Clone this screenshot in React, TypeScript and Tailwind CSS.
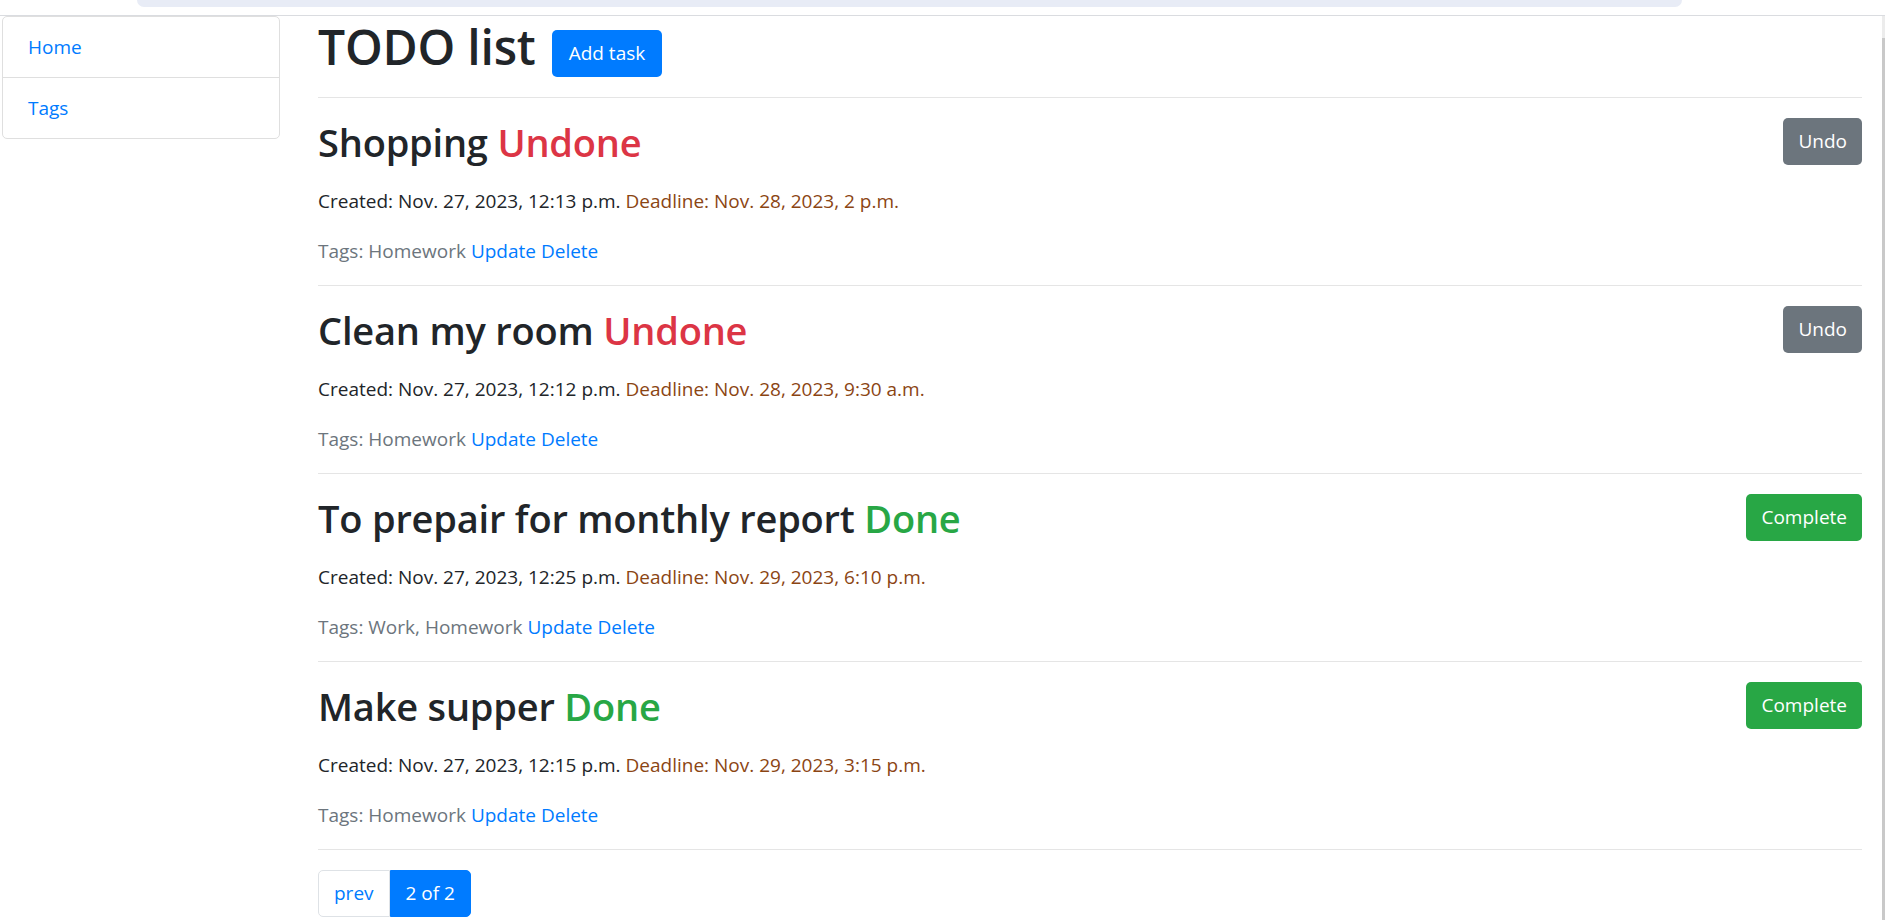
const font = "font-['Open_Sans',sans-serif]";

type Task = {
  title: string;
  done: boolean;
  created: string;
  deadline: string;
  tags: string;
};

const tasks: Task[] = [
  { title: "Shopping", done: false, created: "Nov. 27, 2023, 12:13 p.m.", deadline: "Nov. 28, 2023, 2 p.m.", tags: "Homework" },
  { title: "Clean my room", done: false, created: "Nov. 27, 2023, 12:12 p.m.", deadline: "Nov. 28, 2023, 9:30 a.m.", tags: "Homework" },
  { title: "To prepair for monthly report", done: true, created: "Nov. 27, 2023, 12:25 p.m.", deadline: "Nov. 29, 2023, 6:10 p.m.", tags: "Work, Homework" },
  { title: "Make supper", done: true, created: "Nov. 27, 2023, 12:15 p.m.", deadline: "Nov. 29, 2023, 3:15 p.m.", tags: "Homework" },
];

function TaskItem({ t }: { t: Task }) {
  return (
    <div className="pt-5 pb-[19px] border-b border-[#e5e5e5]">
      <div className="flex items-start justify-between">
        <h2 className="text-[38px] leading-[48px] font-semibold tracking-[-0.2px] text-[#212529]">
          {t.title}{" "}
          <span className={t.done ? "text-[#28a745]" : "text-[#dc3545]"}>{t.done ? "Done" : "Undone"}</span>
        </h2>
        {t.done ? (
          <button className="h-[47px] px-[15px] rounded-[5px] bg-[#28a745] text-white text-[19px]">Complete</button>
        ) : (
          <button className="h-[47px] px-[15px] rounded-[5px] bg-[#6c757d] text-white text-[19px]">Undo</button>
        )}
      </div>
      <p className="mt-5 text-[19px] leading-[30px] text-[#212529]">
        Created: {t.created} <span className="text-[#8b4513]">Deadline: {t.deadline}</span>
      </p>
      <p className="mt-5 text-[19px] leading-[30px] text-[#6c757d]">
        Tags: {t.tags} <a className="text-[#007bff]">Update</a> <a className="text-[#007bff]">Delete</a>
      </p>
    </div>
  );
}

export default function App() {
  return (
    <div className={`${font} w-[1885px] h-[920px] bg-white overflow-hidden flex flex-col`}>
      <div className="h-4 shrink-0 border-b border-[#dadce0]">
        <div className="ml-[137px] w-[1545px] h-[7px] rounded-b-[14px] bg-[#e8ecf6]" />
      </div>
      <div className="flex flex-1">
        <nav className="ml-[2px] w-[278px] self-start border border-[#dfdfdf] rounded-[5px] text-[19px] text-[#007bff]">
          <div className="h-[61px] flex items-center px-[25px] border-b border-[#dfdfdf]">Home</div>
          <div className="h-[60px] flex items-center px-[25px]">Tags</div>
        </nav>
        <main className="ml-[38px] w-[1544px] pt-px">
          <div className="flex items-end gap-[16px] pb-5 border-b border-[#e5e5e5]">
            <h1 className="text-[48px] leading-[60px] font-semibold tracking-[-0.2px] text-[#212529]">TODO list</h1>
            <button className="h-[47px] px-[17px] rounded-[5px] bg-[#007bff] text-white text-[19px]">Add task</button>
          </div>
          {tasks.map((t) => (
            <TaskItem key={t.title} t={t} />
          ))}
          <div className="mt-5 flex text-[19px] leading-[25px]">
            <a className="px-[15px] py-[10px] border border-[#dee2e6] rounded-l-[5px] text-[#007bff]">prev</a>
            <span className="px-[15px] py-[10px] border border-[#007bff] rounded-r-[5px] bg-[#007bff] text-white">2 of 2</span>
          </div>
        </main>
        <div className="ml-auto w-[3px] flex flex-col">
          <div className="h-[22px] bg-[#ececec]" />
          <div className="flex-1 bg-[#c9c9c9]" />
        </div>
      </div>
    </div>
  );
}
